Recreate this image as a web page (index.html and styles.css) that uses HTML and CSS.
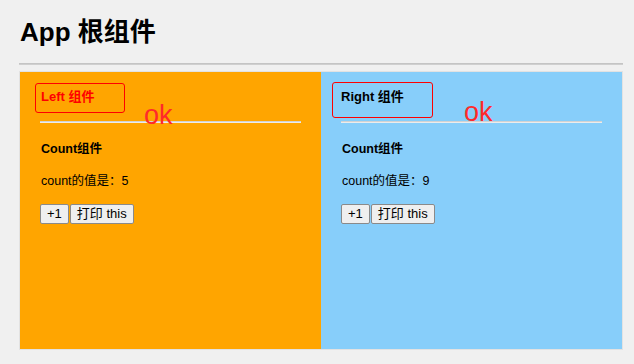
FILE: index.html
```html
<!DOCTYPE html>
<html lang="zh-CN">
<head>
    <meta charset="UTF-8">
    <title>App 根组件</title>
    <link rel="stylesheet" href="styles.css">
</head>
<body>
<div class="app">
    <h1 class="app-title">App 根组件</h1>
    <hr class="app-line">

    <div class="box">
        <!--左边组件-->
        <div class="left">
            <div class="head">
                <h3 class="head-title">Left 组件</h3>
                <span class="ok">ok</span>
            </div>
            <hr class="line">
            <div class="count">
                <h4>Count组件</h4>
                <p>count的值是：5</p>
                <div class="btns">
                    <button>+1</button>
                    <button>打印 this</button>
                </div>
            </div>
        </div>

        <!--右边组件-->
        <div class="right">
            <div class="head">
                <h3 class="head-title">Right 组件</h3>
                <span class="ok">ok</span>
            </div>
            <hr class="line">
            <div class="count">
                <h4>Count组件</h4>
                <p>count的值是：9</p>
                <div class="btns">
                    <button>+1</button>
                    <button>打印 this</button>
                </div>
            </div>
        </div>
    </div>
</div>
</body>
</html>
```

FILE: styles.css
```css
html, body {
    margin: 0;
    padding: 0;
    background-color: #f0f0f0;
    font-family: "Liberation Sans", "Noto Sans CJK SC", sans-serif;
    color: #000;
}

.app {
    padding: 18px 11px 0 20px;
}

.app-title {
    margin: 0;
    font-size: 26px;
    line-height: 29px;
    font-weight: bold;
}

.app-line {
    margin: 16px 0 0 -1px;
    height: 0;
    border: none;
    border-top: 1px solid #c4c4c4;
    border-bottom: 1px solid #cfcfcf;
}

.box {
    display: flex;
    margin: 6px 0 0 -1px;
    border: 1px solid #e2e2e2;
    height: 277px;
}

.left, .right {
    width: 301px;
    padding: 0 20px;
    box-sizing: border-box;
}

.left {
    background-color: orange;
}

.right {
    background-color: lightskyblue;
}

.head {
    display: flex;
    align-items: flex-start;
}

.head-title {
    margin: 0;
    border: 1px solid red;
    border-radius: 3px;
    box-sizing: border-box;
    font-size: 13px;
    font-weight: bold;
    line-height: 16px;
}

.left .head {
    margin-top: 11px;
    height: 38px;
}

.left .head-title {
    margin-left: -5px;
    width: 90px;
    height: 30px;
    padding: 5px 5px;
    color: red;
}

.right .head {
    margin-top: 10px;
    height: 39px;
}

.right .head-title {
    margin-left: -9px;
    width: 101px;
    height: 36px;
    padding: 6px 8px;
}

.ok {
    font-size: 27px;
    line-height: 27px;
    color: #ff2a2a;
}

.left .ok {
    margin: 19px 0 0 19px;
}

.right .ok {
    margin: 17px 0 0 31px;
}

.line {
    margin: 0;
    height: 0;
    border: none;
    border-top: 1px solid #d2d2d2;
    border-bottom: 1px solid #ececec;
}

.count h4 {
    margin: 18px 0 0 1px;
    font-size: 12.5px;
    line-height: 16px;
    font-weight: bold;
}

.count p {
    margin: 16px 0 0 1px;
    font-size: 12.5px;
    line-height: 16px;
}

.btns {
    display: flex;
    gap: 1px;
    margin-top: 15px;
}

.btns button {
    font-family: "Liberation Sans", "Noto Sans CJK SC", sans-serif;
    font-size: 13px;
    line-height: 16px;
    padding: 1px 6px;
    background-color: #efefef;
    border: 1px solid #8a8a8a;
    border-radius: 2px;
    color: #000;
}
```
